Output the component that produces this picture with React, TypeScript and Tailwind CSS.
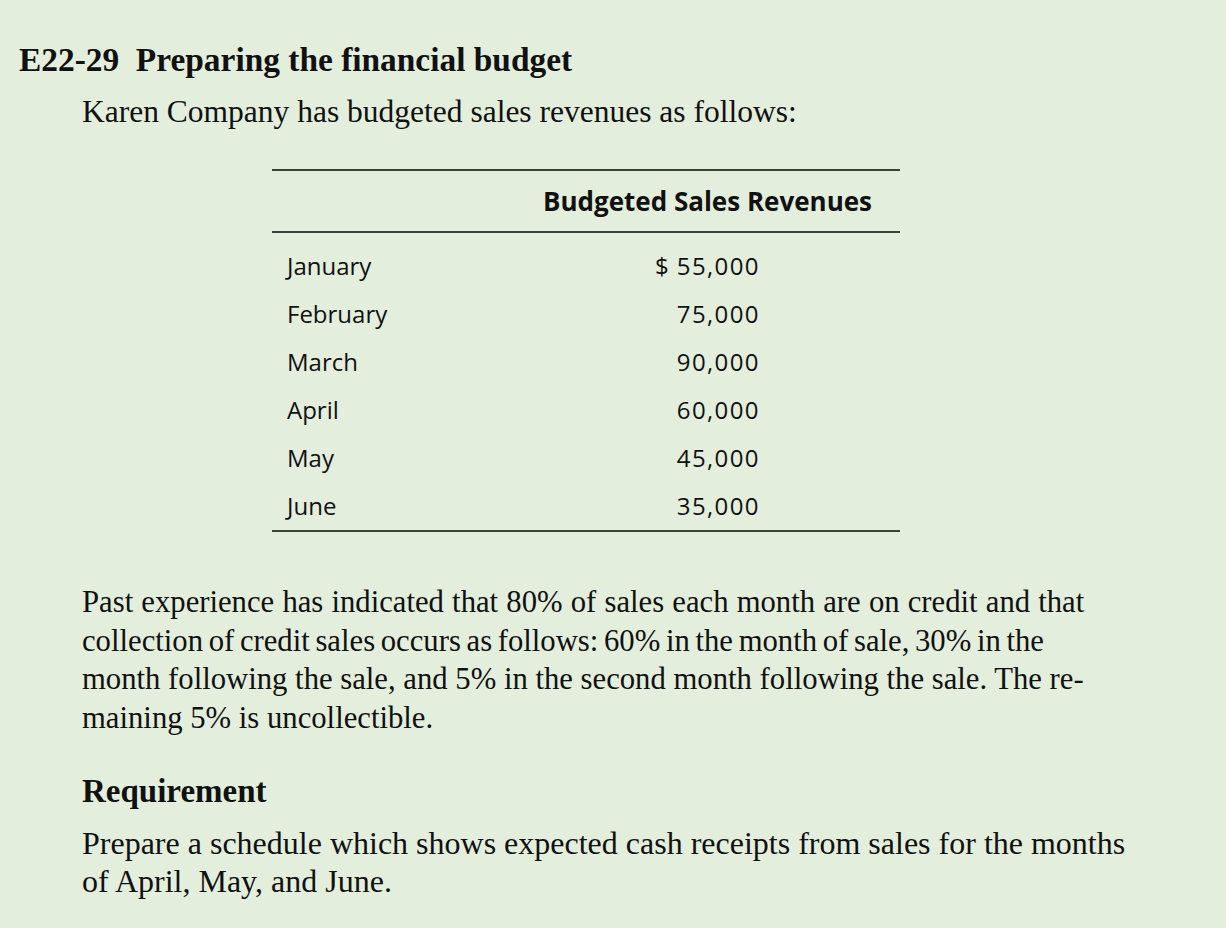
import React from 'react';

type Row = { month: string; amount: string; dollar?: boolean };

const rows: Row[] = [
    { month: 'January', amount: '55,000', dollar: true },
    { month: 'February', amount: '75,000' },
    { month: 'March', amount: '90,000' },
    { month: 'April', amount: '60,000' },
    { month: 'May', amount: '45,000' },
    { month: 'June', amount: '35,000' },
];

const serif = { fontFamily: '"Liberation Serif", "Times New Roman", serif' };
const sans = { fontFamily: '"Open Sans", "Noto Sans", sans-serif' };

const SalesTable: React.FC = () => (
    <div className="ml-[190px] w-[628px] text-[#111]" style={sans}>
        <div className="border-t-2 border-b-2 border-[#3a4239] flex py-[15px] text-[26px] leading-[30px] font-bold">
            <div className="flex-1" />
            <div className="w-[385px] text-center">Budgeted Sales Revenues</div>
        </div>
        <div className="pt-[9px] border-b-2 border-[#3a4239] text-[24px] leading-[48px]">
            {rows.map((r) => (
                <div key={r.month} className="flex">
                    <div className="flex-1 pl-[15px]">{r.month}</div>
                    <div className="w-[385px] pr-[140px] flex justify-end">
                        {r.dollar && <span className="mr-auto pl-[140px]">$</span>}
                        <span className="tracking-[1.4px]">{r.amount}</span>
                    </div>
                </div>
            ))}
        </div>
    </div>
);

export default function App() {
    return (
        <div className="w-[1226px] h-[928px] overflow-hidden bg-[#e3eedc] text-[#111] pt-[40px] pl-[19px]">
            <h1 className="text-[33.4px] leading-[40px] font-bold whitespace-nowrap" style={serif}>
                E22-29&nbsp; Preparing the financial budget
            </h1>
            <div className="pl-[63px]">
                <p className="mt-[13px] text-[31.5px] leading-[38px] whitespace-nowrap" style={serif}>
                    Karen Company has budgeted sales revenues as follows:
                </p>

                <div className="mt-[38px]">
                    <SalesTable />
                </div>

                <p className="mt-[51px] text-[30.7px] leading-[38.5px] whitespace-nowrap" style={serif}>
                    <span className="[word-spacing:0.5px]">
                        Past experience has indicated that 80% of sales each month are on credit and that
                    </span>
                    <br />
                    <span className="[word-spacing:-2px]">
                        collection of credit sales occurs as follows: 60% in the month of sale, 30% in the
                    </span>
                    <br />
                    month following the sale, and 5% in the second month following the sale. The re-
                    <br />
                    maining 5% is uncollectible.
                </p>

                <h2 className="mt-[35px] text-[33px] leading-[38px] font-bold" style={serif}>
                    Requirement
                </h2>
                <p className="mt-[14px] text-[32px] leading-[38px] whitespace-nowrap" style={serif}>
                    Prepare a schedule which shows expected cash receipts from sales for the months
                    <br />
                    of April, May, and June.
                </p>
            </div>
        </div>
    );
}
